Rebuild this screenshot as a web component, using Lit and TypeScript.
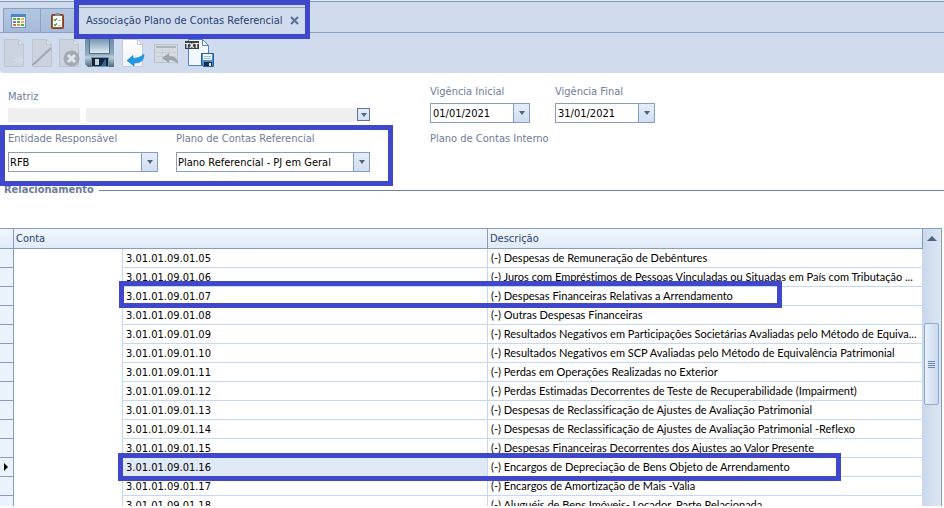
import { LitElement, html, css, svg } from "lit";
import { customElement, property, state } from "lit/decorators.js";
import { classMap } from "lit/directives/class-map.js";

interface Account {
  code: string;
  description: string;
}

const ACCOUNTS: Account[] = [
  { code: "3.01.01.09.01.05", description: "(-) Despesas de Remuneração de Debêntures" },
  { code: "3.01.01.09.01.06", description: "(-) Juros com Empréstimos de Pessoas Vinculadas ou Situadas em País com Tributação ..." },
  { code: "3.01.01.09.01.07", description: "(-) Despesas Financeiras Relativas a Arrendamento" },
  { code: "3.01.01.09.01.08", description: "(-) Outras Despesas Financeiras" },
  { code: "3.01.01.09.01.09", description: "(-) Resultados Negativos em Participações Societárias Avaliadas pelo Método de Equiva..." },
  { code: "3.01.01.09.01.10", description: "(-) Resultados Negativos em SCP Avaliadas pelo Método de Equivalência Patrimonial" },
  { code: "3.01.01.09.01.11", description: "(-) Perdas em Operações Realizadas no Exterior" },
  { code: "3.01.01.09.01.12", description: "(-) Perdas Estimadas Decorrentes de Teste de Recuperabilidade (Impairment)" },
  { code: "3.01.01.09.01.13", description: "(-) Despesas de Reclassificação de Ajustes de Avaliação Patrimonial" },
  { code: "3.01.01.09.01.14", description: "(-) Despesas de Reclassificação de Ajustes de Avaliação Patrimonial -Reflexo" },
  { code: "3.01.01.09.01.15", description: "(-) Despesas Financeiras Decorrentes dos Ajustes ao Valor Presente" },
  { code: "3.01.01.09.01.16", description: "(-) Encargos de Depreciação de Bens Objeto de Arrendamento" },
  { code: "3.01.01.09.01.17", description: "(-) Encargos de Amortização de Mais -Valia" },
  { code: "3.01.01.09.01.18", description: "(-) Aluguéis de Bens Imóveis- Locador, Parte Relacionada" },
];

const base = css`
  * {
    box-sizing: border-box;
  }
  button,
  input,
  select {
    margin: 0;
    padding: 0;
    border: 0;
    border-radius: 0;
    background: none;
    color: inherit;
    font: inherit;
  }
  .callout {
    position: absolute;
    border: 5px solid #3f48cc;
    pointer-events: none;
  }
`;

const page = svg`<path d="M1.5 .5h15l5 5v22h-20z" fill="url(#paper)" stroke="#c9cbd0"/><path d="M16.5 .5v5h5z" fill="#fff" stroke="#c9cbd0"/>`;
const grayPage = svg`<path d="M1.5 .5h14l5 5v22h-19z" fill="#ccd3de" stroke="#bdc5d1"/><path d="M15.5 .5v5h5z" fill="#dfe4eb" stroke="#bdc5d1"/>`;

@customElement("tab-strip")
export class TabStrip extends LitElement {
  static styles = [
    base,
    css`
      :host {
        display: block;
        background: #d0dcee;
        border-top: 1px solid #dde9f2;
      }
      .tabs {
        position: relative;
        display: flex;
        align-items: flex-end;
        height: 32px;
        padding-left: 3px;
        border-top: 1px solid #8096b4;
        border-bottom: 1px solid #8ba0c2;
      }
      .tab {
        display: flex;
        align-items: center;
        width: 38px;
        height: 24px;
        padding-left: 7px;
        border: 1px solid #8ba0c2;
        border-bottom: 0;
        background: linear-gradient(#b3c6df, #a6bbd9);
      }
      .tab + .tab {
        border-left: 0;
        padding-left: 10px;
      }
      .active {
        display: flex;
        align-items: center;
        justify-content: space-between;
        width: 228px;
        height: 26px;
        margin-bottom: -1px;
        padding: 0 8px 0 7px;
        border-top: 1px solid #8ba0c2;
        background: #d0dcee;
        color: #27416f;
        white-space: nowrap;
      }
      .name {
        line-height: 24px;
      }
      .close {
        width: 9px;
        height: 9px;
      }
      svg {
        display: block;
      }
      .spot {
        left: 74px;
        top: -2px;
        width: 236px;
        height: 39px;
        z-index: 1;
      }
    `,
  ];

  render() {
    const colors = ["#62a545", "#62a545", "#efb73e", "#4c8fd0", "#62a545", "#efb73e", "#e8653a", "#e88b3a", "#62a545"];
    return html`
      <nav class="tabs" aria-label="Abas">
        <button class="tab" aria-label="Calendário">
          <svg width="15" height="14" viewBox="0 0 15 14">
            <rect x=".5" y=".5" width="14" height="13" fill="#fff" stroke="#5c93c6" />
            <rect x="0" y="0" width="15" height="3" fill="#4a86c5" />
            ${colors.map((c, i) => svg`<rect x=${2 + (i % 3) * 4} y=${4 + Math.floor(i / 3) * 3} width="3" height="2" fill=${c}/>`)}
          </svg>
        </button>
        <button class="tab" aria-label="Tarefas">
          <svg width="13" height="16" viewBox="0 0 13 16">
            <rect x=".5" y="1.5" width="12" height="14" rx="1" fill="#a0562f" stroke="#7e4327" />
            <rect x="2" y="3" width="9" height="11" fill="#fff" />
            <rect x="4" y="0" width="5" height="3" rx="1" fill="#8b8f96" />
            <path d="M3 6.5l1 1 2-2M3 11.5l1 1 2-2" fill="none" stroke="#3f9a3c" stroke-width="1.3" />
            <path d="M7 7.5h3M7 12.5h3" stroke="#b9bec6" />
          </svg>
        </button>
        <div class="active">
          <span class="name">Associação Plano de Contas Referencial</span>
          <button class="close" aria-label="Fechar">
            <svg width="9" height="9" viewBox="0 0 9 9">
              <path d="M1 1l7 7M8 1l-7 7" stroke="#5a6f97" stroke-width="2" />
            </svg>
          </button>
        </div>
        <div class="callout spot"></div>
      </nav>
    `;
  }
}

@customElement("tool-bar")
export class ToolBar extends LitElement {
  static styles = [
    base,
    css`
      :host {
        display: block;
        background: #fff;
      }
      .bar {
        display: flex;
        align-items: flex-start;
        height: 40px;
        padding: 6px 3px 0;
        gap: 5px;
        border-bottom-left-radius: 3px;
        background: #d0dcee;
      }
      .wide {
        margin-left: 2px;
      }
      button,
      svg {
        display: block;
      }
      .tag {
        font: bold 7px "DejaVu Sans Condensed", sans-serif;
        fill: #fff;
      }
    `,
  ];

  render() {
    return html`
      <div class="bar" role="toolbar" aria-label="Ações">
        <button aria-label="Novo" disabled>
          <svg width="23" height="28" viewBox="0 0 23 28">
            ${grayPage}
            <path d="M16 16v10M11 21h10M12.5 17.5l7 7M19.5 17.5l-7 7" stroke="#d9dee6" />
          </svg>
        </button>
        <button aria-label="Editar" disabled>
          <svg width="22" height="28" viewBox="0 0 22 28">
            ${grayPage}
            <path d="M3 25L20 9" stroke="#a3a9b3" stroke-width="2" />
            <path d="M1 26l3-2" stroke="#8d939e" />
          </svg>
        </button>
        <button aria-label="Excluir" disabled>
          <svg width="22" height="28" viewBox="0 0 22 28">
            ${grayPage}
            <circle cx="13.5" cy="19.5" r="8" fill="#a5abb4" />
            <path d="M10 16l7 7M17 16l-7 7" stroke="#e2e6ec" stroke-width="3" />
          </svg>
        </button>
        <button aria-label="Salvar">
          <svg width="29" height="28" viewBox="0 0 29 28">
            <defs>
              <linearGradient id="disk" x2="0" y2="1">
                <stop offset="0" stop-color="#6d8ba2" />
                <stop offset=".55" stop-color="#8fadc1" />
                <stop offset=".65" stop-color="#bed0dc" />
                <stop offset="1" stop-color="#47677f" />
              </linearGradient>
              <linearGradient id="shutter" x2="0" y2="1">
                <stop offset="0" stop-color="#7795ad" />
                <stop offset="1" stop-color="#dfeaf2" />
              </linearGradient>
            </defs>
            <path d="M1 0h27q1 0 1 1v26q0 1-1 1H3l-3-3V1q0-1 1-1z" fill="url(#disk)" />
            <rect x="5" y="0" width="19" height="14" fill="url(#shutter)" />
            <path d="M4.5 0v14.5h20v-14.5" fill="none" stroke="#4d6f8b" />
            <rect x="6" y="18" width="18" height="10" fill="#7692a7" />
            <rect x="7" y="19" width="16" height="8" fill="#152536" />
            <path d="M10 20h4v6h-4z" fill="#c3d2dd" />
            <path d="M16 27l5-8v8z" fill="#2e69a4" />
          </svg>
        </button>
        <button aria-label="Desfazer" class="wide">
          <svg width="25" height="28" viewBox="0 0 25 28">
            <defs>
              <linearGradient id="paper" x2="0" y2="1">
                <stop offset="0" stop-color="#fff" />
                <stop offset="1" stop-color="#eef0f3" />
              </linearGradient>
            </defs>
            ${page}
            <path d="M6 21.5l6-5v3q6 0 11-4 0 9-10 8.5v3z" fill="#1c9ae6" stroke="#0f78c4" stroke-width=".6" />
          </svg>
        </button>
        <button aria-label="Restaurar" disabled class="wide">
          <svg width="27" height="28" viewBox="0 0 27 28">
            <rect x="1.5" y="5.5" width="23" height="18" fill="#d6dbe2" stroke="#bcc2cb" />
            <rect x="3" y="7" width="20" height="2" fill="#aeb4bd" />
            <path d="M3 13.5h20M3 17.5h20M9.5 10v13M16.5 10v13" stroke="#c8cdd5" />
            <path d="M9 19l7-5v3q9 0 9 8-3-4-9-4v3z" fill="#9ea5af" />
          </svg>
        </button>
        <button aria-label="Exportar TXT">
          <svg width="30" height="29" viewBox="0 0 30 29">
            <path d="M3.5 .5h14l6 6v20h-20z" fill="#f2f7fd" stroke="#4b86c6" />
            <path d="M17.5 .5v6h6z" fill="#fff" stroke="#4b86c6" />
            <rect x="0" y="2" width="14" height="8" fill="#3f3f3f" />
            <text class="tag" x="0" y="9">TXT</text>
            <path d="M16.5 14.5h12v13h-10l-2-2z" fill="#4590d6" stroke="#245f9d" />
            <rect x="18" y="15" width="9" height="6" fill="#f4f8fc" />
            <path d="M19 17.5h7M19 19.5h7" stroke="#9cb9d6" />
            <rect x="19" y="23" width="8" height="4" fill="#1d2e42" />
            <rect x="24" y="24" width="2" height="3" fill="#e4edf5" />
          </svg>
        </button>
      </div>
    `;
  }
}

@customElement("filter-form")
export class FilterForm extends LitElement {
  static styles = [
    base,
    css`
      :host {
        display: block;
        position: relative;
      }
      .form {
        display: flex;
        gap: 60px;
        padding: 11px 8px 0;
      }
      .left {
        width: 362px;
        padding-top: 5px;
      }
      .row {
        display: flex;
      }
      .field {
        display: flex;
        flex-direction: column;
        gap: 3px;
      }
      label,
      .caption {
        display: block;
        color: #6d7c9b;
        line-height: 16px;
        white-space: nowrap;
      }
      .masked {
        display: flex;
        gap: 6px;
        height: 14px;
        margin: 3px 0 9px;
      }
      .masked .code {
        flex: none;
        width: 72px;
        background: #efefef;
      }
      .masked .company {
        background: #efefef;
      }
      .pair {
        display: flex;
        flex: 1;
      }
      .combo {
        position: relative;
        display: flex;
        height: 20px;
        border: 1px solid #869dbf;
        background: #fff;
        color: #000;
      }
      select,
      input {
        flex: 1;
        min-width: 0;
        padding: 0 2px;
        appearance: none;
        outline: 0;
      }
      select {
        padding: 0 1px;
      }
      .drop {
        display: grid;
        place-items: center;
        width: 16px;
        border-left: 1px solid #869dbf;
        background: linear-gradient(#e4eef9, #d0def0);
      }
      .drop::after {
        content: "";
        border: 3px solid transparent;
        border-top: 4px solid #4f6288;
        border-bottom: 0;
      }
      .boxed {
        width: 13px;
        height: 13px;
        border: 1px solid #5f7793;
      }
      select + .drop {
        pointer-events: none;
      }
      .entity {
        width: 150px;
      }
      .plan {
        width: 194px;
      }
      .date {
        width: 100px;
      }
      .selects {
        gap: 18px;
      }
      .selects .field {
        gap: 5px;
      }
      .dates {
        gap: 25px;
        margin-bottom: 8px;
      }
      .spot {
        left: 0;
        top: 52px;
        width: 393px;
        height: 61px;
      }
    `,
  ];

  render() {
    return html`
      <form class="form">
        <div class="left">
          <label for="code">Matriz</label>
          <div class="masked">
            <input class="code" id="code" />
            <div class="pair">
              <input class="company" aria-label="Empresa" />
              <button type="button" class="drop boxed" aria-label="Abrir lista"></button>
            </div>
          </div>
          <div class="row selects">
            <div class="field entity">
              <label for="entity">Entidade Responsável</label>
              <div class="combo">
                <select id="entity"><option>RFB</option></select>
                <span class="drop"></span>
              </div>
            </div>
            <div class="field plan">
              <label for="plan">Plano de Contas Referencial</label>
              <div class="combo">
                <select id="plan"><option>Plano Referencial - PJ em Geral</option></select>
                <span class="drop"></span>
              </div>
            </div>
          </div>
        </div>
        <div>
          <div class="row dates">
            <div class="field date">
              <label for="start">Vigência Inicial</label>
              <div class="combo">
                <input id="start" value="01/01/2021" />
                <button type="button" class="drop" aria-label="Abrir calendário"></button>
              </div>
            </div>
            <div class="field date">
              <label for="end">Vigência Final</label>
              <div class="combo">
                <input id="end" value="31/01/2021" />
                <button type="button" class="drop" aria-label="Abrir calendário"></button>
              </div>
            </div>
          </div>
          <div class="caption">Plano de Contas Interno</div>
        </div>
      </form>
      <div class="callout spot"></div>
    `;
  }
}

@customElement("account-grid")
export class AccountGrid extends LitElement {
  static styles = [
    base,
    css`
      :host {
        display: flex;
        position: relative;
        min-height: 0;
        overflow: hidden;
        margin: 0 2px 2px 0;
        border-top: 1px solid #869dbf;
        border-right: 1px solid #869dbf;
      }
      .view {
        flex: 1;
        min-width: 0;
        overflow: hidden;
      }
      table {
        width: 100%;
        table-layout: fixed;
        border-spacing: 0;
        color: #000;
      }
      .c-mark {
        width: 14px;
      }
      .c-indent {
        width: 109px;
      }
      .c-code {
        width: 365px;
      }
      th,
      td {
        height: 19px;
        padding: 2px 3px 0;
        border-right: 1px solid #c3d8f4;
        border-bottom: 1px solid #c3d8f4;
        line-height: 16px;
        font-weight: normal;
        text-align: left;
        white-space: nowrap;
        overflow: hidden;
      }
      .text {
        padding: 0 0 0 3px;
        font-family: Lato, sans-serif;
        font-variant-ligatures: none;
      }
      thead th {
        height: 20px;
        padding: 0 2px;
        border-color: #869dbf;
        background: linear-gradient(#f1f6fc, #dfebf8);
        color: #27416f;
        line-height: 19px;
      }
      .mark {
        padding: 0 0 0 4px;
        border-color: #869dbf;
        background: #eaf2fc;
      }
      .mark svg {
        display: block;
      }
      .indent {
        border-bottom: 0;
      }
      .selected .code {
        background: #e0eaf6;
      }
      .track {
        display: flex;
        flex-direction: column;
        width: 18px;
        padding: 0 1px;
        background: linear-gradient(90deg, #c9d8ea, #dce7f2);
      }
      .up {
        display: grid;
        place-items: center;
        height: 18px;
      }
      .up::after {
        content: "";
        border: 5px solid transparent;
        border-bottom: 5px solid #4f6288;
        border-top: 0;
      }
      .thumb {
        display: grid;
        place-content: center;
        gap: 1px;
        width: 15px;
        height: 82px;
        margin-top: 76px;
        border: 1px solid #8fa8cb;
        border-radius: 2px;
        background: linear-gradient(90deg, #e9f1fa, #c9d9ec);
      }
      .grip {
        width: 7px;
        height: 1px;
        background: #6f89b5;
      }
      .first {
        left: 119px;
        top: 52px;
        width: 663px;
        height: 27px;
      }
      .second {
        left: 118px;
        top: 224px;
        width: 723px;
        height: 28px;
      }
    `,
  ];

  @property({ attribute: false }) accounts: Account[] = [];
  @state() private selected = "3.01.01.09.01.16";

  render() {
    return html`
      <div class="view">
        <table>
          <colgroup>
            <col class="c-mark" />
            <col class="c-indent" />
            <col class="c-code" />
            <col />
          </colgroup>
          <thead>
            <tr>
              <th></th>
              <th colspan="2" scope="col">Conta</th>
              <th scope="col">Descrição</th>
            </tr>
          </thead>
          <tbody>
            ${this.accounts.map((a) => {
              const on = a.code === this.selected;
              return html`
                <tr class=${classMap({ selected: on })} @click=${() => (this.selected = a.code)}>
                  <td class="mark">
                    ${on ? html`<svg width="4" height="8" viewBox="0 0 4 8"><path d="M0 0l4 4-4 4z" /></svg>` : null}
                  </td>
                  <td class="indent"></td>
                  <td class="code">${a.code}</td>
                  <td class="text">${a.description}</td>
                </tr>
              `;
            })}
          </tbody>
        </table>
      </div>
      <div class="track">
        <button class="up" aria-label="Rolar para cima"></button>
        <div class="thumb">
          <span class="grip"></span><span class="grip"></span><span class="grip"></span><span class="grip"></span>
        </div>
      </div>
      <div class="callout first"></div>
      <div class="callout second"></div>
    `;
  }
}

@customElement("app-root")
export class AppRoot extends LitElement {
  static styles = [
    base,
    css`
      :host {
        display: flex;
        flex-direction: column;
        height: 100vh;
        overflow: hidden;
        background: #fff;
        font: 11px "DejaVu Sans Condensed", sans-serif;
      }
      .heading {
        display: flex;
        align-items: center;
        gap: 5px;
        margin: 11px 0 31px;
        padding-left: 4px;
        color: #6d7c9b;
        font: bold 11px/14px "DejaVu Sans Condensed", sans-serif;
      }
      .heading::after {
        content: "";
        flex: 1;
        border-top: 1px solid #6d829f;
      }
      account-grid {
        flex: 1;
      }
      tab-strip,
      tool-bar,
      filter-form {
        flex: none;
      }
      filter-form {
        z-index: 1;
      }
    `,
  ];

  render() {
    return html`
      <tab-strip></tab-strip>
      <tool-bar></tool-bar>
      <filter-form></filter-form>
      <h2 class="heading">Relacionamento</h2>
      <account-grid .accounts=${ACCOUNTS}></account-grid>
    `;
  }
}
